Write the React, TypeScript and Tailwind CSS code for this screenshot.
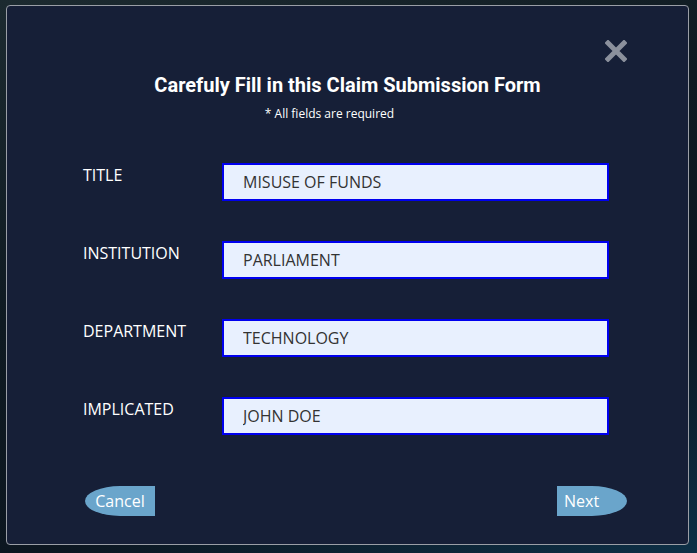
const fields = [
    { label: "TITLE", value: "MISUSE OF FUNDS" },
    { label: "INSTITUTION", value: "PARLIAMENT" },
    { label: "DEPARTMENT", value: "TECHNOLOGY" },
    { label: "IMPLICATED", value: "JOHN DOE" },
]

export default function App() {
    return (
        <div className="w-[697px] h-[553px] overflow-hidden pt-[5px] pl-[6px] bg-[linear-gradient(160deg,#1c2a30_0%,#0f1a22_40%,#0c1620_70%,#0d3047_100%)]" style={{ fontFamily: '"Open Sans", sans-serif' }}>
            <div className="relative w-[683px] h-[540px] rounded-[4px] border border-[#9a9ea6] bg-[#161f37]">
                <button className="absolute top-[34px] right-[61px] w-[22px] h-[22px] flex items-center justify-center">
                    <svg viewBox="0 0 22 22" className="w-[22px] h-[22px]">
                        <path d="M3 3 L19 19 M19 3 L3 19" stroke="#8b909c" strokeWidth="5" strokeLinecap="square" />
                    </svg>
                </button>
                <h1 className="pt-[67px] text-center text-white text-[20px] font-bold leading-[24px]" style={{ fontFamily: 'Roboto, sans-serif' }}>
                    Carefuly Fill in this Claim Submission Form
                </h1>
                <p className="mt-[9px] pr-[36px] text-center text-white text-[12px] leading-[16px]">* All fields are required</p>
                <div className="mt-[41px] pl-[76px] flex flex-col gap-[40px]">
                    {fields.map((f) => (
                        <div key={f.label} className="flex items-start">
                            <label className="w-[139px] pt-[2px] text-white text-[16px] leading-[20px]">{f.label}</label>
                            <input
                                readOnly
                                value={f.value}
                                className="w-[387px] h-[38px] bg-[#e8f0fe] border-2 border-[#0000ee] pl-[19px] text-[16px] text-[#333] outline-none"
                                style={{ fontFamily: '"Open Sans", sans-serif' }}
                            />
                        </div>
                    ))}
                </div>
                <div className="mt-[51px] pl-[78px] pr-[61px] flex justify-between">
                    <button className="w-[70px] h-[30px] bg-[#6aa5cb] text-white text-[16px] rounded-l-[50%_50%] flex items-center justify-center">Cancel</button>
                    <button className="w-[70px] h-[30px] bg-[#6aa5cb] text-white text-[16px] rounded-r-[50%_50%] flex items-center justify-start pl-[7px]">Next</button>
                </div>
            </div>
        </div>
    )
}
